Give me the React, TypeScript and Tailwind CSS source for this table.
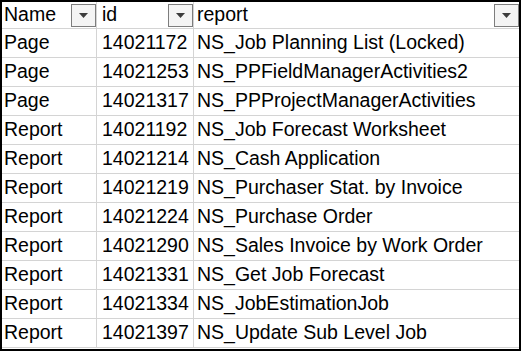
import type { ReactNode } from "react";

const rows = [
  ["Page", "14021172", "NS_Job Planning List (Locked)"],
  ["Page", "14021253", "NS_PPFieldManagerActivities2"],
  ["Page", "14021317", "NS_PPProjectManagerActivities"],
  ["Report", "14021192", "NS_Job Forecast Worksheet"],
  ["Report", "14021214", "NS_Cash Application"],
  ["Report", "14021219", "NS_Purchaser Stat. by Invoice"],
  ["Report", "14021224", "NS_Purchase Order"],
  ["Report", "14021290", "NS_Sales Invoice by Work Order"],
  ["Report", "14021331", "NS_Get Job Forecast"],
  ["Report", "14021334", "NS_JobEstimationJob"],
  ["Report", "14021397", "NS_Update Sub Level Job"],
];

function FilterButton() {
  return (
    <span className="ml-auto mt-[2px] mb-[1px] flex h-[23px] w-[25px] shrink-0 items-center justify-center border border-[#7d7d7d] bg-[#f4f4f4]">
      <svg width="9" height="5" viewBox="0 0 9 5">
        <path d="M0 0 H9 L4.5 5 Z" fill="#3c3c3c" />
      </svg>
    </span>
  );
}

function HeaderCell({ label, className }: { label: string; className: string }) {
  return (
    <div className={`flex items-stretch border-r border-[#d4d4d4] ${className}`}>
      <span className="flex items-center pl-[2px]">{label}</span>
      <FilterButton />
    </div>
  );
}

function Cell({ children, className }: { children: ReactNode; className: string }) {
  return <div className={`flex items-center whitespace-nowrap ${className}`}>{children}</div>;
}

export default function App() {
  return (
    <div
      className="h-[351px] w-[521px] overflow-hidden border-2 border-black bg-white text-[19.5px] leading-none text-black"
      style={{ fontFamily: '"Liberation Sans", Arial, sans-serif' }}
    >
      <div className="flex h-[27px] border-b border-[#d4d4d4]">
        <HeaderCell label="Name" className="w-[95px]" />
        <HeaderCell label="id" className="w-[97px] pl-[3px]" />
        <div className="flex flex-1 items-stretch">
          <span className="flex items-center pl-[3px]">report</span>
          <FilterButton />
        </div>
      </div>
      {rows.map(([name, id, report]) => (
        <div key={id} className="flex h-[29px] border-b border-[#d4d4d4]">
          <Cell className="w-[95px] border-r border-[#d4d4d4] pl-[2px]">{name}</Cell>
          <Cell className="w-[97px] border-r border-[#d4d4d4] pl-[5px]">{id}</Cell>
          <Cell className="flex-1 pl-[3px]">{report}</Cell>
        </div>
      ))}
    </div>
  );
}
